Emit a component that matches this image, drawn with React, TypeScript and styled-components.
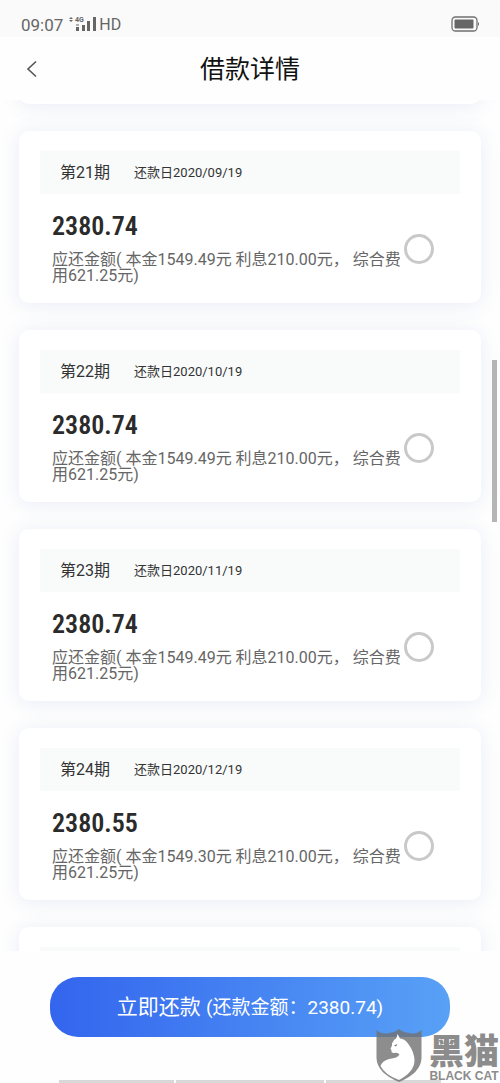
import React from "react";
import styled, { createGlobalStyle } from "styled-components";

const GlobalStyle = createGlobalStyle`
  *, *::before, *::after { box-sizing: border-box; }
  body {
    margin: 0;
    background: #fefefe;
    font-family: Roboto, "Noto Sans CJK SC", sans-serif;
    color: #333;
  }
  h1, p { margin: 0; font-weight: 400; }
`;

const Page = styled.div`
  position: relative;
  display: flex;
  flex-direction: column;
  height: 100vh;
  overflow: hidden;
`;

const StatusBar = styled.div`
  display: flex;
  align-items: flex-end;
  justify-content: space-between;
  height: 37px;
  padding: 0 20px 3px 21px;
  background: #fafafa;
  color: #666;
  font-size: 16px;
  line-height: 20px;
`;

const StatusGroup = styled.div`
  display: flex;
  align-items: center;
  height: 20px;
`;

const Clock = styled.span`
  padding-top: 2px;
  font-size: 17px;
`;

const Network = styled.span`
  padding-top: 2px;
`;

const Signal = styled.svg`
  width: 28px;
  height: 16px;
  margin: 0 2px 0 6px;
`;

const Battery = styled.svg`
  width: 29px;
  height: 16px;
`;

const Header = styled.header`
  display: grid;
  grid-template-columns: 40px 1fr 40px;
  align-items: center;
  height: 63px;
  padding: 0 12px;
`;

const BackButton = styled.button`
  display: flex;
  align-items: center;
  justify-content: center;
  width: 40px;
  height: 40px;
  padding: 0;
  border: 0;
  background: none;
`;

const Title = styled.h1`
  padding-top: 2px;
  color: #111;
  font-size: 25px;
  line-height: 36px;
  text-align: center;
`;

const PlanList = styled.main`
  display: flex;
  flex: 1;
  flex-direction: column;
  gap: 27px;
  min-height: 0;
  padding: 0 19px;
  overflow: hidden;
`;

const Card = styled.section`
  flex: none;
  padding: 20px 21px;
  border-radius: 10px;
  background: #fff;
  box-shadow: 0 2px 20px rgba(80, 110, 190, 0.12);
`;

const PreviousCard = styled(Card)`
  height: 40px;
  margin-top: -36px;
`;

const PeriodBar = styled.div`
  display: flex;
  align-items: center;
  gap: 24px;
  height: 43px;
  padding: 0 20px;
  background: #f9fbfb;
`;

const Period = styled.span`
  font-size: 16px;
  line-height: 24px;
`;

const DueDate = styled.span`
  font-size: 13px;
  line-height: 24px;
`;

const CardBody = styled.label`
  display: flex;
  align-items: center;
  gap: 2px;
  height: 89px;
  padding: 0 26px 0 12px;
`;

const Figures = styled.span`
  flex: 1;
  padding-top: 16px;
  height: 89px;
`;

const Amount = styled.strong`
  display: block;
  margin-bottom: 10px;
  color: #2b2b2b;
  font-family: "Roboto Condensed", Roboto, sans-serif;
  font-size: 26px;
  font-weight: 600;
  line-height: 32px;
`;

const Detail = styled.span`
  display: block;
  color: #666;
  font-size: 16px;
  line-height: 16px;
`;

const Radio = styled.input`
  flex: none;
  appearance: none;
  width: 30px;
  height: 30px;
  margin: 20px 0 0;
  border: 3px solid #c9c9c9;
  border-radius: 50%;
  background: #fff;

  &:checked { border-color: #3a6df0; }
`;

const Footer = styled.footer`
  display: flex;
  flex: none;
  flex-direction: column;
  justify-content: space-between;
  height: 132px;
  padding-top: 26px;
  background: #fefefe;
`;

const PayButton = styled.button`
  height: 60px;
  margin: 0 50px;
  padding: 0;
  border: 0;
  border-radius: 28px;
  background: linear-gradient(90deg, #3365ee, #58a1f6);
  color: #fff;
  font-family: inherit;
  font-size: 21px;
  line-height: 30px;
`;

const PayAmount = styled.span`
  font-size: 19px;
`;

const BottomTabs = styled.div`
  display: grid;
  grid-template-columns: 116fr 148fr 116fr;
  gap: 2px;
  height: 3px;
  margin: 0 59px;
`;

const BottomTab = styled.span`
  background: #d8d8d8;
`;

const ScrollThumb = styled.div`
  position: absolute;
  top: 360px;
  right: 3px;
  width: 5px;
  height: 162px;
  background: #b5b5b5;
`;

const Watermark = styled.div`
  position: absolute;
  right: 1px;
  bottom: 0;
  display: flex;
  gap: 7px;
  color: #8c8c8c;
  pointer-events: none;
`;

const Shield = styled.svg`
  width: 46px;
  height: 53px;
`;

const Brand = styled.div`
  display: flex;
  flex-direction: column;
  align-items: center;
  justify-content: flex-end;
`;

const BrandName = styled.span`
  font-family: "Noto Sans CJK SC", sans-serif;
  font-size: 35px;
  font-weight: 900;
  line-height: 40px;
`;

const BrandLatin = styled.span`
  font-family: "Liberation Sans", sans-serif;
  font-size: 12px;
  font-weight: 700;
  line-height: 14px;
  white-space: nowrap;
`;

const plans = [
  { period: 21, date: "2020/09/19", amount: "2380.74", principal: "1549.49" },
  { period: 22, date: "2020/10/19", amount: "2380.74", principal: "1549.49" },
  { period: 23, date: "2020/11/19", amount: "2380.74", principal: "1549.49" },
  { period: 24, date: "2020/12/19", amount: "2380.55", principal: "1549.30" },
];

export default function App() {
  return (
    <Page>
      <GlobalStyle />
      <StatusBar>
        <StatusGroup>
          <Clock>09:07</Clock>
          <Signal viewBox="0 0 28 16" fill="#666" aria-hidden="true">
            <path d="M0 3L2 1L4 3ZM0 4H4L2 6Z" />
            <text x="6" y="6" fontSize="7" fontWeight="700" fontFamily="Roboto, sans-serif">
              4G
            </text>
            <path d="M7 11H10V15H7ZM13 9H16V15H13ZM18 5H21V15H18ZM24 1H27V15H24Z" />
            <path d="M7 8H10V10H7Z" opacity=".5" />
          </Signal>
          <Network>HD</Network>
        </StatusGroup>
        <StatusGroup>
          <Battery viewBox="0 0 29 16" aria-hidden="true">
            <rect x="1" y="1" width="25" height="14" rx="3.500" fill="none" stroke="#707070" strokeWidth="1.300" />
            <rect x="3.500" y="3.500" width="19" height="9" rx="1" fill="#666" />
            <path d="M27 6Q29 8 27 10Z" fill="#666" />
          </Battery>
        </StatusGroup>
      </StatusBar>
      <Header>
        <BackButton aria-label="返回">
          <svg width="12" height="18" viewBox="0 0 12 18" fill="none" stroke="#555" strokeWidth="1.600">
            <path d="M10 1.500L2 9L10 16.500" />
          </svg>
        </BackButton>
        <Title>借款详情</Title>
      </Header>
      <PlanList>
        <PreviousCard />
        {plans.map((plan) => (
          <Card key={plan.period}>
            <PeriodBar>
              <Period>第{plan.period}期</Period>
              <DueDate>还款日{plan.date}</DueDate>
            </PeriodBar>
            <CardBody>
              <Figures>
                <Amount>{plan.amount}</Amount>
                <Detail>
                  应还金额( 本金{plan.principal}元 利息210.00元， 综合费用621.25元)
                </Detail>
              </Figures>
              <Radio type="radio" name="period" value={plan.period} />
            </CardBody>
          </Card>
        ))}
        <Card>
          <PeriodBar />
        </Card>
      </PlanList>
      <Footer>
        <PayButton>
          立即还款 <PayAmount>(还款金额：2380.74)</PayAmount>
        </PayButton>
        <BottomTabs>
          <BottomTab />
          <BottomTab />
          <BottomTab />
        </BottomTabs>
      </Footer>
      <ScrollThumb />
      <Watermark>
        <Shield viewBox="0 0 46 53" aria-hidden="true">
          <path
            d="M0.500 1Q6 6 13 4Q19 3.500 23 0Q27 3.500 33 4Q40 6 45.500 1V29Q45 44 23 53Q1 44 0.500 29Z"
            fill="#707070"
            fillOpacity=".8"
          />
          <path
            d="M21.500 5L24 9.500Q29 10 32 14.500Q38.500 23 38.500 32Q38 43 23 51Q9 46 4.500 37Q6 32 13 30Q22 29 23.500 25.500Q22 23 18 24Q15 24 15.500 21.500L14.500 19.500Q16.500 17.500 16 14.500Q17 11 20.500 9Z"
            fill="#fff"
          />
          <path d="M18 16.500L21.500 15L20 17.500Z" fill="#777" />
        </Shield>
        <Brand>
          <BrandName>黑猫</BrandName>
          <BrandLatin>BLACK CAT</BrandLatin>
        </Brand>
      </Watermark>
    </Page>
  );
}
